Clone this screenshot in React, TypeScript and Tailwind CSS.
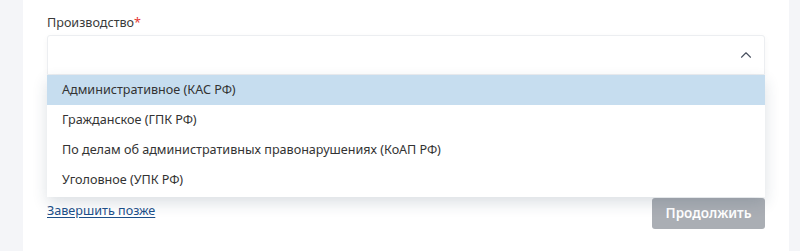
import { ChevronUp } from "lucide-react";

const options = [
  "Административное (КАС РФ)",
  "Гражданское (ГПК РФ)",
  "По делам об административных правонарушениях (КоАП РФ)",
  "Уголовное (УПК РФ)",
];

export default function App() {
  return (
    <div className="flex h-[251px] w-[800px] overflow-hidden bg-[#f4f5f8] font-['Noto_Sans',sans-serif] text-[12.6px] text-[#333]">
      <div className="w-[23px] shrink-0" />
      <div className="flex-1 bg-white px-[24px] pt-[14px]">
        <div className="leading-[17px] text-[#3a3a3a]">
          Производство<span className="text-[#e53935]">*</span>
        </div>
        <div className="relative mt-[4px]">
          <div className="flex h-[40px] items-center justify-end rounded-t-[3px] border border-[#eceef1] bg-white pr-[9px] shadow-[0_2px_6px_rgba(0,0,0,0.04)]">
            <ChevronUp className="h-[18px] w-[18px] text-[#4a5160]" strokeWidth={1.5} />
          </div>
          <div className="absolute left-0 right-0 top-[40px] z-10 bg-white pb-[2px] shadow-[0_6px_14px_rgba(40,60,90,0.16)]">
            {options.map((o, i) => (
              <div
                key={o}
                className={`flex h-[30px] items-center px-[15px] ${i === 0 ? "bg-[#c6ddef]" : ""}`}
              >
                {o}
              </div>
            ))}
          </div>
        </div>
        <div className="mt-[123px] flex items-center justify-between">
          <a href="#" className="mb-[5px] text-[12.6px] text-[#1d4f8a] underline underline-offset-2">
            Завершить позже
          </a>
          <button className="h-[31px] w-[113px] rounded-[3px] bg-[#aaaeb4] text-[13.5px] font-semibold text-white">
            Продолжить
          </button>
        </div>
      </div>
      <div className="w-[11px] shrink-0" />
    </div>
  );
}
